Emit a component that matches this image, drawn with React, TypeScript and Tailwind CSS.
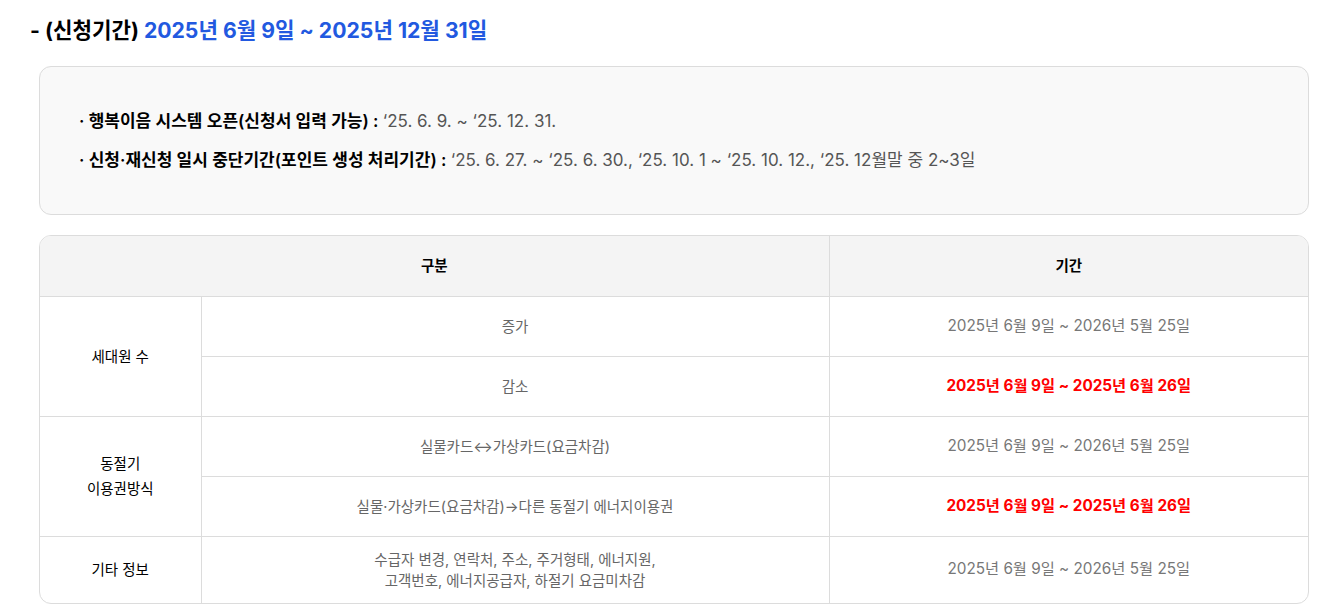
const font = { fontFamily: 'Inter, "Noto Sans CJK KR", sans-serif' };

type Row = { group?: string; span?: number; item: string[]; period: string; highlight?: boolean; tall?: boolean };

const rows: Row[] = [
  { group: '세대원 수', span: 2, item: ['증가'], period: '2025년 6월 9일 ~ 2026년 5월 25일' },
  { item: ['감소'], period: '2025년 6월 9일 ~ 2025년 6월 26일', highlight: true },
  { group: '동절기\n이용권방식', span: 2, item: ['실물카드↔가상카드(요금차감)'], period: '2025년 6월 9일 ~ 2026년 5월 25일' },
  { item: ['실물·가상카드(요금차감)→다른 동절기 에너지이용권'], period: '2025년 6월 9일 ~ 2025년 6월 26일', highlight: true },
  {
    group: '기타 정보',
    span: 1,
    item: ['수급자 변경, 연락처, 주소, 주거형태, 에너지원,', '고객번호, 에너지공급자, 하절기 요금미차감'],
    period: '2025년 6월 9일 ~ 2026년 5월 25일',
    tall: true,
  },
];

export default function App() {
  return (
    <div className="bg-white min-h-screen pl-[30px] pr-[19px] pt-[16px] text-black" style={font}>
      <h2 className="text-[21.2px] leading-[28px] font-bold">
        - (신청기간) <span className="text-[#2259e0]">2025년 6월 9일 ~ 2025년 12월 31일</span>
      </h2>

      <div className="ml-[9px] mt-[22px] rounded-xl border border-[#dcdcdc] bg-[#f9f9f9] px-[39px] py-[41px] flex flex-col gap-[13px] text-[17px] leading-[26px]">
        <p>
          <span className="font-semibold">· 행복이음 시스템 오픈(신청서 입력 가능) : </span>
          <span className="text-[#555]">‘25. 6. 9. ~ ‘25. 12. 31.</span>
        </p>
        <p>
          <span className="font-semibold">· 신청·재신청 일시 중단기간(포인트 생성 처리기간) : </span>
          <span className="text-[#555]">‘25. 6. 27. ~ ‘25. 6. 30., ‘25. 10. 1 ~ ‘25. 10. 12., ‘25. 12월말 중 2~3일</span>
        </p>
      </div>

      <div className="ml-[9px] mt-[20px] rounded-xl border border-[#dcdcdc] overflow-hidden">
        <table className="w-full border-collapse border-hidden text-[14.5px] text-center">
          <colgroup>
            <col className="w-[161px]" />
            <col className="w-[628px]" />
            <col />
          </colgroup>
          <thead>
            <tr className="bg-[#f4f4f4] h-[60px]">
              <th colSpan={2} className="border border-[#dcdcdc] font-semibold">구분</th>
              <th className="border border-[#dcdcdc] font-semibold">기간</th>
            </tr>
          </thead>
          <tbody>
            {rows.map((r, i) => (
              <tr key={i} className={r.tall ? 'h-[67px]' : 'h-[60px]'}>
                {r.group && (
                  <td rowSpan={r.span} className="border border-[#dcdcdc] whitespace-pre-line leading-[25px]">
                    {r.group}
                  </td>
                )}
                <td className="border border-[#dcdcdc] text-[#666] leading-[21px]">
                  {r.item.map((t, j) => (
                    <div key={j}>{t}</div>
                  ))}
                </td>
                <td
                  className={
                    'border border-[#dcdcdc] text-[15.3px] ' +
                    (r.highlight ? 'text-[#ff0000] font-bold' : 'text-[#777]')
                  }
                >
                  {r.period}
                </td>
              </tr>
            ))}
          </tbody>
        </table>
      </div>
    </div>
  );
}
